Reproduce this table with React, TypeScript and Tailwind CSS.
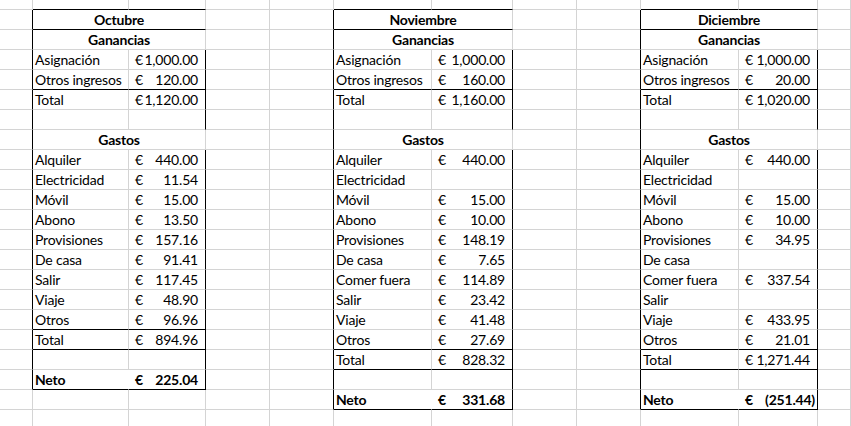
type Row = { head?: string; label?: string; amount?: string; neg?: boolean; bold?: boolean };

type Sheet = { col: number; last: number; lines: number[]; rows: Record<number, Row> };

const sheets: Sheet[] = [
  {
    col: 1,
    last: 19,
    lines: [0, 1, 4, 16, 17, 19],
    rows: {
      1: { head: "Octubre" },
      2: { head: "Ganancias" },
      3: { label: "Asignación", amount: "1,000.00" },
      4: { label: "Otros ingresos", amount: "120.00" },
      5: { label: "Total", amount: "1,120.00" },
      7: { head: "Gastos" },
      8: { label: "Alquiler", amount: "440.00" },
      9: { label: "Electricidad", amount: "11.54" },
      10: { label: "Móvil", amount: "15.00" },
      11: { label: "Abono", amount: "13.50" },
      12: { label: "Provisiones", amount: "157.16" },
      13: { label: "De casa", amount: "91.41" },
      14: { label: "Salir", amount: "117.45" },
      15: { label: "Viaje", amount: "48.90" },
      16: { label: "Otros", amount: "96.96" },
      17: { label: "Total", amount: "894.96" },
      19: { label: "Neto", amount: "225.04", bold: true },
    },
  },
  {
    col: 5,
    last: 20,
    lines: [0, 1, 4, 17, 18, 20],
    rows: {
      1: { head: "Noviembre" },
      2: { head: "Ganancias" },
      3: { label: "Asignación", amount: "1,000.00" },
      4: { label: "Otros ingresos", amount: "160.00" },
      5: { label: "Total", amount: "1,160.00" },
      7: { head: "Gastos" },
      8: { label: "Alquiler", amount: "440.00" },
      9: { label: "Electricidad" },
      10: { label: "Móvil", amount: "15.00" },
      11: { label: "Abono", amount: "10.00" },
      12: { label: "Provisiones", amount: "148.19" },
      13: { label: "De casa", amount: "7.65" },
      14: { label: "Comer fuera", amount: "114.89" },
      15: { label: "Salir", amount: "23.42" },
      16: { label: "Viaje", amount: "41.48" },
      17: { label: "Otros", amount: "27.69" },
      18: { label: "Total", amount: "828.32" },
      20: { label: "Neto", amount: "331.68", bold: true },
    },
  },
  {
    col: 9,
    last: 20,
    lines: [0, 1, 4, 17, 18, 20],
    rows: {
      1: { head: "Diciembre" },
      2: { head: "Ganancias" },
      3: { label: "Asignación", amount: "1,000.00" },
      4: { label: "Otros ingresos", amount: "20.00" },
      5: { label: "Total", amount: "1,020.00" },
      7: { head: "Gastos" },
      8: { label: "Alquiler", amount: "440.00" },
      9: { label: "Electricidad" },
      10: { label: "Móvil", amount: "15.00" },
      11: { label: "Abono", amount: "10.00" },
      12: { label: "Provisiones", amount: "34.95" },
      13: { label: "De casa" },
      14: { label: "Comer fuera", amount: "337.54" },
      15: { label: "Salir" },
      16: { label: "Viaje", amount: "433.95" },
      17: { label: "Otros", amount: "21.01" },
      18: { label: "Total", amount: "1,271.44" },
      20: { label: "Neto", amount: "(251.44)", neg: true, bold: true },
    },
  },
];

const ROWS = 22;
const COLS = 12;

function cellFor(c: number) {
  // which table (if any) owns this column
  for (const s of sheets) {
    if (c === s.col || c === s.col + 1) return { s, off: c - s.col };
  }
  return null;
}

export default function App() {
  const cells: React.ReactNode[] = [];

  for (let r = 0; r < ROWS; r++) {
    for (let c = 0; c < COLS; c++) {
      const hit = cellFor(c);
      const inTable = hit && r >= 1 && r <= hit.s.last;
      const row = inTable ? hit!.s.rows[r] : undefined;

      // merged heading cells: the second column is covered
      if (row?.head && hit!.off === 1) continue;

      let right = "border-r-[#d4d4d4]";
      let bottom = "border-b-[#d4d4d4]";

      const leftOf = sheets.find((s) => s.col - 1 === c && r >= 1 && r <= s.last);
      if (leftOf) right = "border-r-black";
      if (inTable) {
        if (hit!.off === 1) right = "border-r-black";
        if (hit!.off === 0 && row?.bold) right = "border-r-white";
      }
      if (hit && r <= hit.s.last && hit.s.lines.includes(r)) bottom = "border-b-black";

      const base = `border-r border-b ${right} ${bottom} flex items-center min-w-0 whitespace-nowrap`;

      if (row?.head) {
        cells.push(
          <div key={`${r}-${c}`} className={`${base} col-span-2 justify-center font-bold`}>
            {row.head}
          </div>
        );
        continue;
      }

      if (row && hit!.off === 0) {
        cells.push(
          <div key={`${r}-${c}`} className={`${base} pl-[2px] ${row.bold ? "font-bold" : ""}`}>
            {row.label}
          </div>
        );
        continue;
      }

      if (row && hit!.off === 1 && row.amount) {
        cells.push(
          <div
            key={`${r}-${c}`}
            className={`${base} justify-between pl-[6px] ${row.neg ? "pr-[2px]" : "pr-[7px]"} ${row.bold ? "font-bold" : ""}`}
          >
            <span>€</span>
            <span>{row.amount}</span>
          </div>
        );
        continue;
      }

      cells.push(<div key={`${r}-${c}`} className={base} />);
    }
  }

  return (
    <div className="h-[426px] w-[851px] overflow-hidden bg-white text-black font-['Lato',_'Liberation_Sans',_sans-serif] text-[14px] leading-[18px] tracking-[-0.2px]">
      <div className="grid grid-cols-[33px_96px_77px_64px_64px_98px_81px_64px_64px_98px_79px_1fr] grid-rows-[10px_repeat(21,20px)]">
        {cells}
      </div>
    </div>
  );
}
